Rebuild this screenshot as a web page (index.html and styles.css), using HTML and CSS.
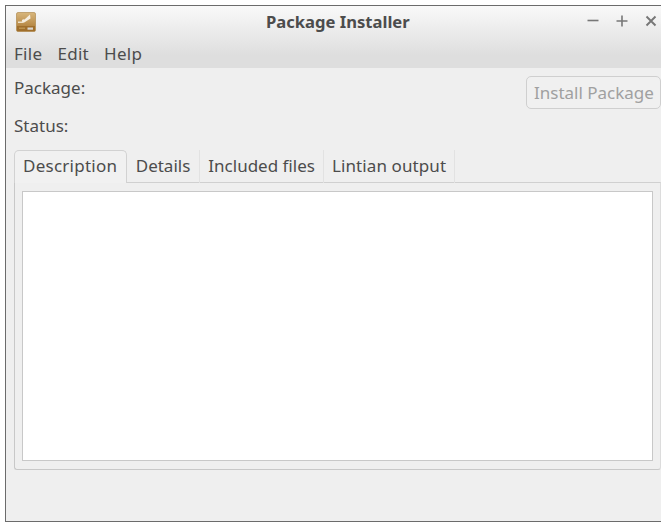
FILE: index.html
```html
<!DOCTYPE html>
<html lang="en">
<head>
<meta charset="utf-8">
<title>Package Installer</title>
<link rel="stylesheet" href="styles.css">
</head>
<body>
<div class="window">
  <header class="chrome">
    <div class="titlebar">
      <svg class="app-icon" width="20" height="20" viewBox="0 0 20 20">
        <defs>
          <linearGradient id="box" x1="0" y1="0" x2="0" y2="1">
            <stop offset="0" stop-color="#d8b67c"/>
            <stop offset="1" stop-color="#a9762f"/>
          </linearGradient>
        </defs>
        <rect x="0.5" y="0.5" width="19" height="19" rx="1.5" fill="url(#box)" stroke="#a8803f" stroke-width="0.6"/>
        <rect x="1" y="14" width="18" height="5" fill="#a06f2c"/>
        <path d="M14 2.5 L14.5 6.5 L9 10 L8 8 Z" fill="#f6efe2"/>
        <circle cx="7.5" cy="9" r="1.7" fill="#f6efe2"/>
        <path d="M2 9.5 H7 V11 H2 Z" fill="#efe2ca"/>
        <rect x="11.5" y="15.5" width="5.5" height="2.2" fill="#d9d6d0"/>
        <rect x="3" y="15.5" width="6" height="1.5" fill="#bb924f"/>
      </svg>
      <span class="title">Package Installer</span>
      <div class="controls">
        <svg width="12" height="12" viewBox="0 0 12 12"><path d="M0.5 5.5H11.5" stroke="#777" stroke-width="1.6"/></svg>
        <svg width="12" height="12" viewBox="0 0 12 12"><path d="M0.5 6H11.5M6 0.5V11.5" stroke="#777" stroke-width="1.6"/></svg>
        <svg width="12" height="12" viewBox="0 0 12 12"><path d="M1.5 1.5L10.5 10.5M10.5 1.5L1.5 10.5" stroke="#777" stroke-width="1.9"/></svg>
      </div>
    </div>
    <nav class="menubar">
      <span>File</span><span>Edit</span><span>Help</span>
    </nav>
  </header>
  <main class="content">
    <div class="info">
      <div class="fields">
        <div class="field">Package:</div>
        <div class="field">Status:</div>
      </div>
      <button class="install" disabled>Install Package</button>
    </div>
    <div class="tabs">
      <div class="tab active">Description</div>
      <div class="tab">Details</div>
      <div class="tab">Included files</div>
      <div class="tab">Lintian output</div>
    </div>
    <section class="panel">
      <div class="textview"></div>
    </section>
  </main>
</div>
</body>
</html>
```
FILE: styles.css
```css
html, body {
  margin: 0;
  height: 100%;
  background: #fff;
}

body {
  padding: 5px 0 1px 5px;
  box-sizing: border-box;
  overflow: hidden;
  font-family: "Noto Sans", sans-serif;
  font-size: 17px;
  color: #4c4c4c;
}

.window {
  height: 100%;
  box-sizing: border-box;
  border: 1px solid #6b6b6b;
  border-width: 1px 0 1px 1px;
  background: #efefef;
  display: flex;
  flex-direction: column;
}

.chrome {
  height: 62px;
  flex: none;
  background: linear-gradient(#f9f9f9, #dedede 80%);
}

.titlebar {
  height: 30px;
  box-sizing: border-box;
  padding: 6px 0 0 10px;
  display: flex;
  align-items: flex-start;
  position: relative;
}

.app-icon {
  flex: none;
}

.title {
  position: absolute;
  left: 260px;
  top: 6px;
  width: 143px;
  text-align: center;
  font-weight: 700;
  font-size: 16.6px;
  line-height: 20px;
  white-space: nowrap;
}

.controls {
  margin: 3px 4px 0 auto;
  display: flex;
  gap: 17px;
}

.menubar {
  height: 32px;
  box-sizing: border-box;
  padding: 2px 0 0 8px;
  display: flex;
  align-items: center;
  gap: 15px;
  letter-spacing: 0.3px;
}

.content {
  flex: 1;
  display: flex;
  flex-direction: column;
  padding-left: 8px;
}

.info {
  display: flex;
  justify-content: space-between;
  height: 82px;
}

.fields {
  padding-top: 10px;
}

.field {
  height: 38px;
  line-height: 20px;
}

.install {
  margin-top: 8px;
  width: 135px;
  height: 33px;
  padding: 0 0 0 7px;
  box-sizing: border-box;
  border: 1px solid #cfcfcf;
  border-radius: 5px;
  background: #f0f0f0;
  font: inherit;
  color: #a0a0a0;
  text-align: left;
  white-space: nowrap;
}

.tabs {
  display: flex;
  height: 33px;
  box-sizing: border-box;
  margin-bottom: -1px;
  position: relative;
  z-index: 1;
}

.tab {
  padding: 4px 8.5px 0;
  line-height: 23px;
  border-right: 1px solid #e2e2e2;
  white-space: nowrap;
}

.tab:last-child {
  padding: 4px 8px 0 7.5px;
  letter-spacing: 0.1px;
}

.tab.active {
  background: #f1f1f1;
  border: 1px solid #d2d2d2;
  border-bottom: 0;
  border-radius: 5px 5px 0 0;
  padding: 3px 9px 0 8px;
  letter-spacing: 0.25px;
}

.panel {
  height: 288px;
  box-sizing: border-box;
  border: 1px solid #c8c8c8;
  border-right: 1px solid #dcdcdc;
  border-top-color: #d0d0d0;
  border-radius: 0 0 3px 3px;
  padding: 8px 7px;
}

.textview {
  height: 100%;
  box-sizing: border-box;
  background: #fff;
  border: 1px solid #c8c8c8;
}
```
